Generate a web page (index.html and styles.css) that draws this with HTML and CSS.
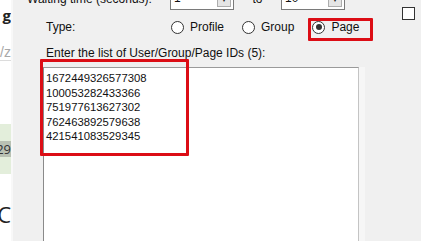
FILE: index.html
```html
<!DOCTYPE html>
<html lang="en">
<head>
    <meta charset="UTF-8">
    <meta name="viewport" content="width=device-width, initial-scale=1.0">
    <title>Page IDs</title>
    <link rel="stylesheet" href="styles.css">
</head>
<body>
    <div class="screen">
        <!-- page behind the dialog, only a thin strip is visible -->
        <div class="backdrop">
            <div class="bd-title">g</div>
            <div class="bd-input">/z</div>
            <div class="bd-band"><span class="bd-chip">29</span></div>
            <div class="bd-head">C</div>
        </div>

        <div class="dialog">
            <div class="dialog-main">
                <div class="row row-wait">
                    <span class="row-label wait-label">Waiting time (seconds):</span>
                    <span class="combo"><span class="combo-value">1</span><span class="combo-btn">&#9662;</span></span>
                    <span class="to-label">to</span>
                    <span class="combo"><span class="combo-value">10</span><span class="combo-btn">&#9662;</span></span>
                </div>

                <div class="row row-type">
                    <span class="row-label type-label">Type:</span>
                    <label class="radio"><span class="radio-dot"></span>Profile</label>
                    <label class="radio"><span class="radio-dot"></span>Group</label>
                    <label class="radio radio-page"><span class="radio-dot checked"></span>Page
                        <span class="mark mark-page"></span>
                    </label>
                </div>

                <div class="ids-label">Enter the list of User/Group/Page IDs (5):</div>

                <div class="ids-wrap">
                    <div class="ids">
                        <div>1672449326577308</div>
                        <div>100053282433366</div>
                        <div>751977613627302</div>
                        <div>762463892579638</div>
                        <div>421541083529345</div>
                    </div>
                    <span class="mark mark-ids"></span>
                </div>
            </div>

            <div class="dialog-side">
                <span class="check"></span>
            </div>
        </div>
    </div>
</body>
</html>
```

FILE: styles.css
```css
html, body {
    margin: 0;
    padding: 0;
}

body {
    font-family: "Liberation Sans", Arial, sans-serif;
    font-size: 12px;
    color: #111;
    background: #fff;
}

.screen {
    display: flex;
    width: 421px;
    height: 241px;
    overflow: hidden;
}

/* page behind */
.backdrop {
    width: 11px;
    flex: none;
    overflow: hidden;
    background: #fff;
    display: flex;
    flex-direction: column;
}

    .backdrop > div {
        display: flex;
        justify-content: flex-end;
        white-space: nowrap;
    }

.bd-title {
    height: 17px;
    margin-top: 7px;
    font-family: "Open Sans", sans-serif;
    font-weight: bold;
    font-size: 15px;
    line-height: 17px;
    color: #222;
}

.bd-input {
    margin-top: 20px;
    height: 16px;
    font-size: 14px;
    line-height: 16px;
    color: #a8a8a8;
    border-bottom: 1px solid #dcdcdc;
}

.bd-band {
    margin-top: 63px;
    height: 50px;
    background: #e3eedb;
    align-items: center;
}

.bd-chip {
    display: block;
    background: #b9c1b3;
    font-family: "Open Sans", sans-serif;
    font-size: 13px;
    line-height: 16px;
    padding: 0 0 0 2px;
    color: #333;
}

.bd-head {
    margin-top: 28px;
    font-family: "Open Sans", sans-serif;
    font-size: 22px;
    line-height: 24px;
    color: #222;
}

/* dialog */
.dialog {
    flex: 1;
    display: flex;
    background: #f0f0f0;
    border-left: 2px solid #f8f8f8;
}

.dialog-main {
    flex: 1;
    display: flex;
    flex-direction: column;
}

.dialog-side {
    width: 19px;
    flex: none;
    padding-top: 7px;
}

.check {
    display: block;
    width: 11px;
    height: 11px;
    border: 1px solid #333;
    background: #fff;
}

.row {
    display: flex;
    align-items: center;
}

.row-wait {
    height: 22px;
    margin-top: -12px;
    padding-left: 14px;
}

.wait-label {
    width: 143px;
}

.combo {
    display: flex;
    align-items: stretch;
    justify-content: space-between;
    width: 62px;
    height: 20px;
    border: 1px solid #7a7a7a;
    background: #fff;
    box-sizing: content-box;
}

.combo-value {
    padding: 2px 0 0 3px;
}

.combo-btn {
    width: 12px;
    margin: 2px 2px 2px 0;
    border: 1px solid #adadad;
    background: #e5e5e5;
    font-size: 8px;
    line-height: 16px;
    text-align: center;
    color: #222;
}

.to-label {
    width: 47px;
    text-align: center;
}

.row-type {
    height: 18px;
    margin-top: 8px;
    padding-left: 33px;
}

.type-label {
    width: 125px;
}

.radio {
    position: relative;
    display: flex;
    align-items: center;
    margin-right: 18px;
}

.radio-dot {
    width: 11px;
    height: 11px;
    margin-right: 6px;
    border: 1px solid #333;
    border-radius: 50%;
    background: #fff;
    display: flex;
    align-items: center;
    justify-content: center;
}

    .radio-dot.checked::after {
        content: "";
        width: 6px;
        height: 6px;
        border-radius: 50%;
        background: #333;
    }

/* red annotation boxes */
.mark {
    position: absolute;
    border: 3px solid #dc0d15;
    border-radius: 1px;
}

.mark-page {
    left: -4px;
    top: -2px;
    width: 59px;
    height: 17px;
}

.ids-label {
    margin-top: 10px;
    padding-left: 33px;
    line-height: 14px;
}

.ids-wrap {
    position: relative;
    flex: 1;
    margin-top: 7px;
    margin-left: 30px;
    width: 316px;
    border-right: 6px solid #f6f6f6;
}

.ids {
    height: 100%;
    box-sizing: border-box;
    padding: 3px 0 0 2px;
    background: #fff;
    border-top: 1px solid #9a9a9a;
    border-left: 1px solid #8a8a8a;
    border-right: 1px solid #c4c4c4;
    font-size: 11.3px;
    line-height: 14.6px;
    color: #111;
}

.mark-ids {
    left: -3px;
    top: -8px;
    width: 143px;
    height: 91px;
}
```
